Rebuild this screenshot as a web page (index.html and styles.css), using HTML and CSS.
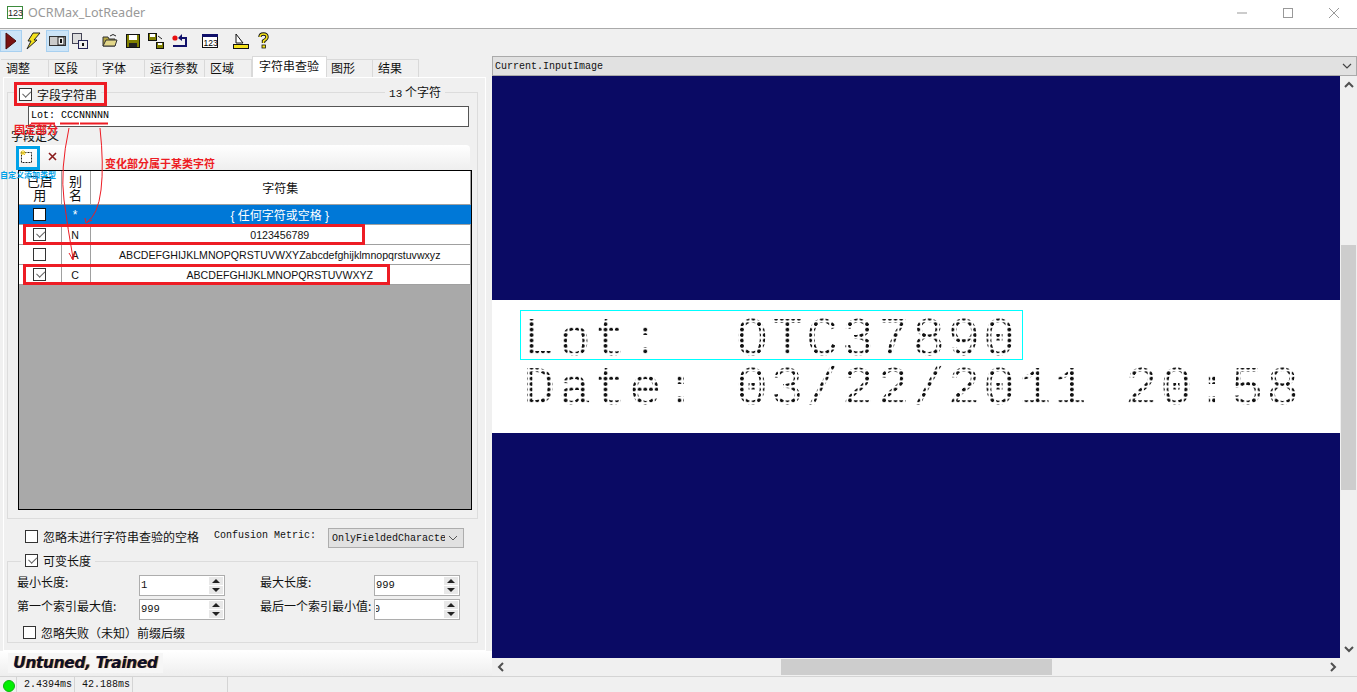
FILE: index.html
```html
<!DOCTYPE html>
<html lang="zh">
<head>
  <meta charset="UTF-8">
  <title>OCRMax_LotReader</title>
  <link rel="stylesheet" href="styles.css">
</head>
<body>
<div class="app">

  <div class="titlebar">
    <svg class="appicon" width="16" height="13" viewBox="0 0 16 13"><rect x="0.5" y="0.5" width="15" height="12" fill="#fff" stroke="#3d8b3d"/></svg>
    <span class="appicon-txt">123</span>
    <span class="apptitle">OCRMax_LotReader</span>
    <div class="winbtns">
      <svg width="12" height="12" viewBox="0 0 12 12"><path d="M1 6H11" stroke="#999"/></svg>
      <svg width="12" height="12" viewBox="0 0 12 12"><rect x="1.5" y="1.5" width="9" height="9" fill="none" stroke="#999"/></svg>
      <svg width="12" height="12" viewBox="0 0 12 12"><path d="M1 1L11 11M11 1L1 11" stroke="#999"/></svg>
    </div>
  </div>

  <div class="toolbar">
    <span class="tool on first"><svg width="14" height="20" viewBox="0 0 14 20"><path d="M2 2L12 10L2 18Z" fill="#7a1212" stroke="#4a0a0a"/></svg></span>
    <span class="tool bolt"><svg width="16" height="18" viewBox="0 0 16 18"><path d="M8 1H15L9 8H12L2 17L6 9H3Z" fill="#f5e21c" stroke="#222"/></svg></span>
    <span class="tool on view"><svg width="17" height="12" viewBox="0 0 17 12"><rect x="0.5" y="1.5" width="16" height="9" fill="#ccc" stroke="#333"/><rect x="9" y="2" width="6" height="8" fill="#eee" stroke="#222"/><path d="M11 4h2v4h-2z" fill="#111"/></svg></span>
    <span class="tool next"><svg width="16" height="16" viewBox="0 0 16 16"><rect x="0.5" y="0.5" width="9" height="10" fill="#ddd" stroke="#445"/><rect x="6.5" y="7.5" width="9" height="8" fill="#eee" stroke="#225"/><path d="M10 10h2v3h-2z" fill="#111"/></svg></span>
    <span class="tool open"><svg width="16" height="15" viewBox="0 0 16 15"><path d="M1 4H6L7 6H13V13H1Z" fill="#b5a642" stroke="#333"/><path d="M1 13L4 7H15L13 13Z" fill="#e3d78a" stroke="#333"/><path d="M8 3Q11 0 14 3" fill="none" stroke="#222"/></svg></span>
    <span class="tool save"><svg width="14" height="14" viewBox="0 0 14 14"><rect x="0.5" y="0.5" width="13" height="13" fill="#808000" stroke="#111"/><rect x="3" y="1" width="8" height="5" fill="#fff"/><rect x="3" y="9" width="8" height="4" fill="#222"/></svg></span>
    <span class="tool saveall"><svg width="16" height="16" viewBox="0 0 16 16"><rect x="0.5" y="0.5" width="8" height="7" fill="#808000" stroke="#111"/><rect x="2" y="1" width="5" height="3" fill="#fff"/><rect x="8.5" y="9.5" width="7" height="6" fill="#808000" stroke="#111"/><rect x="10" y="10" width="4" height="2" fill="#fff"/><path d="M10 3L14 6" stroke="#222"/></svg></span>
    <span class="tool undo"><svg width="16" height="15" viewBox="0 0 16 15"><circle cx="3" cy="5" r="2.6" fill="#e81010"/><path d="M1 13H14V5H9" fill="none" stroke="#10106a" stroke-width="2"/><path d="M10 1L6 5L10 8Z" fill="#10106a"/></svg></span>
    <span class="tool calc"><svg width="16" height="14" viewBox="0 0 16 14"><rect x="0.5" y="0.5" width="15" height="13" fill="#fff" stroke="#111"/><rect x="0" y="0" width="16" height="3" fill="#10106a"/><text x="1.5" y="12" class="svgnum">123</text></svg></span>
    <span class="tool ruler"><svg width="16" height="16" viewBox="0 0 16 16"><path d="M3 1L10 10H3Z" fill="#fff" stroke="#111"/><rect x="0.5" y="11.5" width="15" height="4" fill="#f5e21c" stroke="#111"/></svg></span>
    <span class="tool help"><svg width="13" height="17" viewBox="0 0 13 17"><path d="M3 5Q3 2 6.5 2T10 5Q10 7 6.5 9V11" fill="none" stroke="#111" stroke-width="3.4"/><path d="M3 5Q3 2 6.5 2T10 5Q10 7 6.5 9V11" fill="none" stroke="#f5e21c" stroke-width="1.6"/><rect x="5" y="13" width="3.5" height="3" fill="#f5e21c" stroke="#111" stroke-width="0.8"/></svg></span>
  </div>

  <div class="work">
    <div class="left">
      <div class="tabs">
        <span class="tab t1">调整</span>
        <span class="tab t2">区段</span>
        <span class="tab t3">字体</span>
        <span class="tab t4">运行参数</span>
        <span class="tab t5">区域</span>
        <span class="tab active">字符串查验</span>
        <span class="tab t7">图形</span>
        <span class="tab t8">结果</span>
      </div>

      <div class="panel">
        <div class="group g1">
          <div class="grouphead">
            <label class="check legend"><span class="cb on"></span>字段字符串</label>
            <span class="legend count"><span class="mono11">13</span>&nbsp;个字符</span>
          </div>
          <div class="fieldinput">Lot: CCCNNNNN</div>
          <div class="sectionlabel">字段定义</div>
          <div class="toolstrip">
            <svg class="strip-add" width="15" height="15" viewBox="0 0 15 15"><rect x="2.5" y="3.5" width="10" height="10" fill="#fff" stroke="#222" stroke-dasharray="2 1"/><path d="M4 1V6M1 4H7M2 2L6 6M6 2L2 6" stroke="#e8c820"/></svg>
            <svg class="strip-del" width="11" height="11" viewBox="0 0 11 11"><path d="M2 2L9 9M9 2L2 9" stroke="#8a1c1c" stroke-width="1.6"/></svg>
          </div>
          <div class="gridwrap">
            <table class="grid">
              <colgroup><col class="c1"><col class="c2"><col class="c3"></colgroup>
              <thead>
                <tr><th class="narrow">已启<br>用</th><th class="narrow">别<br>名</th><th>字符集</th></tr>
              </thead>
              <tbody>
                <tr class="sel"><td><span class="cb white"></span></td><td>*</td><td>{ 任何字符或空格 }</td></tr>
                <tr><td><span class="cb on"></span></td><td>N</td><td>0123456789</td></tr>
                <tr><td><span class="cb"></span></td><td>A</td><td>ABCDEFGHIJKLMNOPQRSTUVWXYZabcdefghijklmnopqrstuvwxyz</td></tr>
                <tr><td><span class="cb on"></span></td><td>C</td><td>ABCDEFGHIJKLMNOPQRSTUVWXYZ</td></tr>
              </tbody>
            </table>
          </div>
        </div>

        <div class="optrow">
          <label class="check"><span class="cb"></span>忽略未进行字符串查验的空格</label>
          <span class="metric-label">Confusion Metric:</span>
          <div class="combo"><span class="combo-txt">OnlyFieldedCharacte</span><svg width="10" height="6" viewBox="0 0 10 6"><path d="M1 1L5 5L9 1" fill="none" stroke="#555"/></svg></div>
        </div>

        <div class="group g2">
          <div class="grouphead">
            <label class="check legend"><span class="cb on"></span>可变长度</label>
          </div>
          <div class="spinrow">
            <span class="spinlabel">最小长度:</span>
            <div class="spin"><span class="spinval">1</span><span class="spinbtns"><i class="up"></i><i class="down"></i></span></div>
            <span class="spinlabel second">最大长度:</span>
            <div class="spin"><span class="spinval">999</span><span class="spinbtns"><i class="up"></i><i class="down"></i></span></div>
          </div>
          <div class="spinrow">
            <span class="spinlabel">第一个索引最大值:</span>
            <div class="spin"><span class="spinval">999</span><span class="spinbtns"><i class="up"></i><i class="down"></i></span></div>
            <span class="spinlabel second">最后一个索引最小值:</span>
            <div class="spin"><span class="spinval clipped">0</span><span class="spinbtns"><i class="up"></i><i class="down"></i></span></div>
          </div>
          <label class="check lastcheck"><span class="cb"></span>忽略失败（未知）前缀后缀</label>
        </div>
      </div>

      <div class="resultbar"><span class="resulttxt">Untuned, Trained</span></div>
    </div>

    <div class="right">
      <div class="imgcombo"><span>Current.InputImage</span><svg width="10" height="6" viewBox="0 0 10 6"><path d="M1 1L5 5L9 1" fill="none" stroke="#444" stroke-width="1.2"/></svg></div>
      <div class="viewer">
        <div class="imagearea">
          <div class="band">
            <div class="dots lot">Lot:  OTC37890</div>
            <div class="dots">Date: 03/22/2011 20:58</div>
            <div class="roi"></div>
          </div>
        </div>
        <div class="vscroll">
          <svg width="10" height="7" viewBox="0 0 10 7"><path d="M1 6L5 2L9 6" fill="none" stroke="#505050" stroke-width="2"/></svg>
          <div class="vtrack"><div class="vthumb"></div></div>
          <svg width="10" height="7" viewBox="0 0 10 7"><path d="M1 1L5 5L9 1" fill="none" stroke="#505050" stroke-width="2"/></svg>
        </div>
      </div>
      <div class="hscroll">
        <svg width="7" height="10" viewBox="0 0 7 10"><path d="M6 1L2 5L6 9" fill="none" stroke="#505050" stroke-width="2"/></svg>
        <div class="htrack"><div class="hthumb"></div></div>
        <svg width="7" height="10" viewBox="0 0 7 10"><path d="M1 1L5 5L1 9" fill="none" stroke="#505050" stroke-width="2"/></svg>
      </div>
    </div>
  </div>

  <div class="statusbar">
    <span class="led"></span>
    <span class="cell c-a">2.4394ms</span>
    <span class="cell c-b">42.188ms</span>
    <span class="cell c-c"></span>
    <span class="grip"></span>
  </div>

  <!-- red/blue notes drawn over the screenshot -->
  <svg class="marks" width="490" height="300" viewBox="0 0 490 300">
    <g fill="none" stroke="#ed1c24" stroke-width="3">
      <rect x="15.5" y="83.5" width="90" height="21"/>
      <rect x="24.5" y="225.5" width="339" height="18"/>
      <rect x="24.5" y="265.5" width="364" height="18"/>
    </g>
    <rect x="17.5" y="147.5" width="21" height="21" fill="none" stroke="#00a2e8" stroke-width="3"/>
    <g stroke="#ed1c24" stroke-width="2">
      <path d="M31 123.5H55M60 123.5H79M80 123.5H108"/>
    </g>
    <g fill="none" stroke="#ed1c24">
      <path d="M69 128Q60 170 64 200T73 258"/>
      <path d="M100 128Q104 165 101 190T87 222"/>
      <path d="M69 253L73 260L75 252"/>
      <path d="M85 218L86 223L92 220"/>
    </g>
  </svg>
  <span class="note note-fixed">固定部分</span>
  <span class="note note-change">变化部分属于某类字符</span>
  <span class="note note-add">自定义添加类型</span>
</div>
</body>
</html>
```

FILE: styles.css
```css
* {
  box-sizing: border-box;
}

html, body {
  margin: 0;
  height: 100%;
  overflow: hidden;
}

body {
  font-family: "Noto Sans CJK SC", "Liberation Sans", sans-serif;
  font-size: 12px;
  color: #111;
  background: #f0f0f0;
}

.app {
  position: relative;
  width: 1357px;
  height: 692px;
  display: flex;
  flex-direction: column;
}

/* title bar */
.titlebar {
  position: relative;
  height: 29px;
  flex: none;
  background: #fff;
  border-bottom: 1px solid #aaa;
  display: flex;
  align-items: center;
  padding: 0 0 3px 7px;
}

.appicon-txt {
  position: absolute;
  left: 8px;
  top: 7px;
  font: 9px/13px "Liberation Sans", sans-serif;
  color: #222;
}

.apptitle {
  margin-left: 5px;
  font: 12.6px "Noto Sans", sans-serif;
  color: #999;
}

.winbtns {
  margin-left: auto;
  display: flex;
  gap: 34px;
  padding-right: 17px;
}

/* tool bar */
.toolbar {
  height: 27px;
  flex: none;
  display: flex;
  align-items: center;
  padding-bottom: 4px;
}

.tool {
  height: 22px;
  display: flex;
  align-items: center;
  justify-content: center;
  flex: none;
}

.tool.on {
  background: #cce4f7;
  border: 1px solid #a8d0f0;
}

.first { width: 22px; }
.bolt { width: 16px; margin-left: 3px; }
.view { width: 23px; margin-left: 5px; }
.next { width: 16px; margin-left: 3px; }
.open { width: 16px; margin-left: 14px; }
.save { width: 14px; margin-left: 8px; }
.saveall { width: 16px; margin-left: 8px; }
.undo { width: 16px; margin-left: 8px; }
.calc { width: 16px; margin-left: 14px; }
.ruler { width: 16px; margin-left: 15px; }
.help { width: 13px; margin-left: 8px; }

.svgnum {
  font: 8.5px "Liberation Sans", sans-serif;
}

/* main split */
.work {
  flex: 1;
  display: flex;
  min-height: 0;
}

.left {
  width: 492px;
  flex: none;
  display: flex;
  flex-direction: column;
}

.tabs {
  height: 21px;
  flex: none;
  display: flex;
  align-items: flex-end;
  padding-left: 1px;
}

.tab {
  height: 18px;
  border: 1px solid #d9d9d9;
  border-bottom: 0;
  border-left: 0;
  line-height: 16px;
  padding-left: 5px;
  font-size: 12px;
  white-space: nowrap;
}

.t1, .t2, .t3 { width: 48px; }
.t4 { width: 60px; }
.t5 { width: 47px; }
.t7 { width: 46px; padding-left: 4px; }
.t8 { width: 46px; }

.tab.active {
  width: 75px;
  height: 21px;
  line-height: 18px;
  padding-left: 6px;
  background: #fff;
  border-left: 1px solid #d9d9d9;
}

.panel {
  width: 483px;
  height: 574px;
  margin-left: 3px;
  flex: none;
  background: #f0f0f0;
  border: 1px solid #fff;
  padding: 14px 0 0 3px;
}

.group {
  width: 471px;
  border: 1px solid #dcdcdc;
}

.g1 {
  height: 427px;
  padding: 0 0 0 3px;
}

.g2 {
  height: 82px;
  margin-top: 13px;
  padding: 0 0 0 9px;
}

.grouphead {
  display: flex;
  justify-content: space-between;
  align-items: center;
  height: 18px;
  margin-top: -8px;
}

.legend {
  background: #f0f0f0;
  padding: 0 4px;
}

.g1 .grouphead {
  padding-left: 4px;
  margin-bottom: 3px;
}

.g2 .grouphead {
  margin-left: -2px;
  padding-left: 6px;
  justify-content: flex-start;
  margin-top: -11px;
}

.count {
  margin-right: 32px;
  padding: 0 4px;
  position: relative;
  top: -3px;
}

.mono11 {
  font: 11px "Liberation Mono", monospace;
}

.check {
  display: inline-flex;
  align-items: center;
  gap: 5px;
  white-space: nowrap;
}

.cb {
  position: relative;
  display: inline-block;
  width: 13px;
  height: 13px;
  flex: none;
  background: #fff;
  border: 1px solid #333;
}

.cb.on::after {
  content: "";
  position: absolute;
  left: 2px;
  top: 1px;
  width: 7px;
  height: 4px;
  border-left: 1.5px solid #666;
  border-bottom: 1.5px solid #666;
  transform: rotate(-45deg) translate(0, 1px);
}

.cb.white {
  border-color: #111;
}

.fieldinput {
  width: 441px;
  height: 21px;
  margin: 0 0 0 17px;
  background: #fff;
  border: 1px solid #555;
  padding-left: 2px;
  font: 10px/18px "Liberation Mono", monospace;
  color: #000;
}

.sectionlabel {
  height: 18px;
  line-height: 17px;
  font-size: 12px;
}

.toolstrip {
  width: 454px;
  height: 25px;
  margin-left: 5px;
  display: flex;
  align-items: center;
  gap: 13px;
  padding: 0 0 2px 3px;
  background: linear-gradient(#fff, #eee);
  border-radius: 4px 4px 0 0;
}

.gridwrap {
  width: 454px;
  height: 340px;
  margin-left: 7px;
  background: #a9a9a9;
  border: 1px solid #000;
}

.grid {
  width: 452px;
  table-layout: fixed;
  border-collapse: collapse;
  font: 10.6px "Liberation Sans", "Noto Sans CJK SC", sans-serif;
  text-align: center;
}

.c1 { width: 42px; }
.c2 { width: 29px; }

.grid th {
  height: 33px;
  padding: 0;
  background: #fff;
  font: 12px/13px "Noto Sans CJK SC", sans-serif;
  border-right: 1px solid #a0a0a0;
  border-bottom: 1px solid #a0a0a0;
}

.grid th.narrow {
  font-size: 13px;
  line-height: 14px;
  padding-top: 2px;
}

.grid td {
  height: 20px;
  padding: 1px 1px 0 0;
  background: #fff;
  border-right: 1px solid #a0a0a0;
  border-bottom: 1px solid #a0a0a0;
  vertical-align: middle;
}

.grid .cb {
  display: block;
  margin: -1px auto 0;
}

.grid .sel td {
  background: #0078d7;
  color: #fff;
  border-right-color: #0078d7;
  font-size: 12px;
}

/* options under the grid */
.optrow {
  height: 20px;
  margin-top: 9px;
  display: flex;
  align-items: center;
  padding-left: 18px;
}

.optrow .check {
  margin-top: -3px;
}

.metric-label {
  width: 114px;
  margin-left: 15px;
  margin-top: -5px;
  font: 10px "Liberation Mono", monospace;
  white-space: nowrap;
}

.combo {
  width: 136px;
  height: 20px;
  display: flex;
  align-items: center;
  justify-content: space-between;
  padding: 0 5px 0 3px;
  background: #e1e1e1;
  border: 1px solid #adadad;
  font: 10px "Liberation Mono", monospace;
  overflow: hidden;
}

.combo-txt {
  width: 113px;
  overflow: hidden;
  white-space: nowrap;
}

.spinrow {
  height: 21px;
  margin-top: 3px;
  display: flex;
  align-items: center;
}

.grouphead + .spinrow {
  margin-top: 6px;
}

.spinlabel {
  width: 122px;
  white-space: nowrap;
  margin-top: -9px;
}

.spinlabel.second {
  width: 114px;
  margin-left: 35px;
  font-size: 12px;
}

.spin {
  width: 86px;
  height: 21px;
  flex: none;
  display: flex;
  justify-content: space-between;
  background: #fff;
  border: 1px solid #adadad;
  padding: 1px;
}

.spinval {
  font: 10.5px/17px "Liberation Mono", monospace;
  padding-left: 0;
}

.clipped {
  width: 4px;
  overflow: hidden;
  direction: rtl;
}

.spinbtns {
  width: 14px;
  display: flex;
  flex-direction: column;
  gap: 1px;
}

.spinbtns i {
  flex: 1;
  background: #e8e8e8;
  position: relative;
}

.spinbtns i::after {
  content: "";
  position: absolute;
  left: 3px;
  top: 2px;
  border: 4px solid transparent;
  border-top: 0;
  border-bottom: 4px solid #222;
}

.spinbtns i.down::after {
  border-bottom: 0;
  border-top: 4px solid #222;
}

.lastcheck {
  margin: 3px 0 0 6px;
  height: 18px;
}

/* untuned bar */
.resultbar {
  flex: 1;
  padding: 2px 0 0 8px;
  background: linear-gradient(#fff, #eee);
}

.resulttxt {
  display: inline-block;
  height: 20px;
  padding: 0 5px;
  font: italic bold 15.5px/20px "DejaVu Sans", sans-serif;
  letter-spacing: -0.4px;
  color: #0a1030;
  text-shadow: 1px 0 0 #d98a20;
  background: #f6f6f6;
}

/* right side */
.right {
  flex: 1;
  display: flex;
  flex-direction: column;
  min-width: 0;
}

.imgcombo {
  height: 20px;
  flex: none;
  display: flex;
  align-items: center;
  justify-content: space-between;
  padding: 0 4px 0 2px;
  background: #e1e1e1;
  border: 1px solid #aaa;
  font: 10px "Liberation Mono", monospace;
}

.viewer {
  height: 582px;
  flex: none;
  display: flex;
}

.imagearea {
  flex: 1;
  padding-top: 224px;
  background: #0a0a64;
}

.band {
  position: relative;
  height: 133px;
  padding: 16px 0 0 31px;
  background: #fff;
}

/* dot-matrix print: the real text clipped to a dot grid */
.dots {
  height: 49px;
  font: 54px/49px "Liberation Mono", monospace;
  letter-spacing: 3px;
  white-space: pre;
  color: transparent;
  background-image: radial-gradient(circle, #111 1.7px, transparent 2.1px);
  background-size: 5.7px 5.45px;
  -webkit-background-clip: text;
  background-clip: text;
}

.roi {
  position: absolute;
  left: 28px;
  top: 10px;
  width: 503px;
  height: 50px;
  border: 1px solid #00ffff;
}

.vscroll {
  width: 17px;
  flex: none;
  display: flex;
  flex-direction: column;
  align-items: center;
  padding: 5px 0;
  background: #f0f0f0;
}

.vtrack {
  flex: 1;
  width: 100%;
  padding: 157px 1px 0;
}

.vthumb {
  height: 245px;
  background: #cdcdcd;
}

.hscroll {
  height: 18px;
  flex: none;
  display: flex;
  align-items: center;
  padding: 0 20px 0 5px;
  background: #f0f0f0;
}

.htrack {
  flex: 1;
  height: 16px;
  padding-left: 277px;
}

.hthumb {
  width: 271px;
  height: 16px;
  background: #cdcdcd;
}

/* status bar */
.statusbar {
  height: 16px;
  flex: none;
  display: flex;
  align-items: center;
  border-top: 1px solid #d4d4d4;
  font: 10px "Liberation Mono", monospace;
}

.led {
  width: 12px;
  height: 12px;
  margin: 3px 1px 0 3px;
  border-radius: 50%;
  background: #00f000;
  border: 1px solid #10b010;
}

.cell {
  height: 15px;
  line-height: 15px;
  border-left: 1px solid #d4d4d4;
  white-space: nowrap;
}

.c-a { width: 58px; padding-left: 7px; }
.c-b { width: 58px; padding-left: 7px; }
.c-c { width: 96px; border-right: 1px solid #d4d4d4; }

/* annotations */
.marks {
  position: absolute;
  left: 0;
  top: 0;
  pointer-events: none;
}

.note {
  position: absolute;
  white-space: nowrap;
  font-weight: bold;
}

.note-fixed {
  left: 14px;
  top: 121px;
  font-size: 11px;
  color: #ed1c24;
}

.note-change {
  left: 105px;
  top: 155px;
  font-size: 11px;
  color: #ed1c24;
}

.note-add {
  left: 0;
  top: 169px;
  font-size: 8px;
  color: #00a2e8;
}
```
